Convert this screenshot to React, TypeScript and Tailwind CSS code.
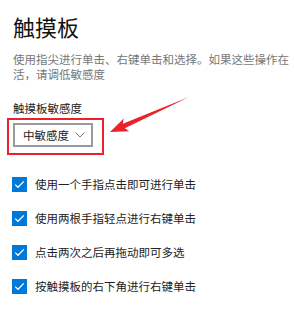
import React from 'react';

const options = [
  '使用一个手指点击即可进行单击',
  '使用两根手指轻点进行右键单击',
  '点击两次之后再拖动即可多选',
  '按触摸板的右下角进行右键单击',
];

function CheckBox() {
  return (
    <div className="w-[15px] h-[15px] bg-[#0078d7] flex items-center justify-center shrink-0">
      <svg width="15" height="15" viewBox="0 0 15 15">
        <polyline points="3.2,7.6 6,10.3 11.8,4.4" fill="none" stroke="#fff" strokeWidth="1.3" />
      </svg>
    </div>
  );
}

export default function App() {
  return (
    <div
      className="relative w-[294px] h-[310px] bg-white overflow-hidden pl-[13px]"
      style={{ fontFamily: '"Noto Sans CJK SC", "Noto Sans", sans-serif' }}
    >
      <h1 className="mt-[11px] text-[22px] leading-[30px] text-[#111] font-normal">触摸板</h1>

      <p className="mt-[11px] text-[11.5px] leading-[15px] text-[#777] whitespace-nowrap">
        使用指尖进行单击、右键单击和选择。如果这些操作在
        <br />
        活，请调低敏感度
      </p>

      <div className="mt-[19px] text-[11.5px] leading-[15px] text-[#222]">触摸板敏感度</div>

      {/* red highlight box around the dropdown */}
      <div className="mt-[2px] -ml-[6px] w-[97px] h-[37px] border-2 border-[#e8232b] pl-[4px] pt-[3px]">
        <div className="w-[80px] h-[24px] border-2 border-[#9a9a9a] flex items-center pl-[8px] pr-[6px] justify-between">
          <span className="text-[11.5px] leading-[15px] text-[#222]">中敏感度</span>
          <svg width="10" height="6" viewBox="0 0 10 6">
            <polyline points="0.5,0.5 5,5 9.5,0.5" fill="none" stroke="#777" strokeWidth="1" />
          </svg>
        </div>
      </div>

      <div className="mt-[12px] flex flex-col">
        {options.map((o) => (
          <div key={o} className="h-[34px] flex items-center -ml-[1px]">
            <CheckBox />
            <span className="ml-[8px] text-[11.5px] leading-[15px] text-[#222]">{o}</span>
          </div>
        ))}
      </div>

      {/* annotation arrow */}
      <svg className="absolute left-0 top-0" width="294" height="310" viewBox="0 0 294 310">
        <polygon
          points="110,132 123.7,118.4 122.8,123.7 189,97 124.8,128.3 129.3,131.2"
          fill="#e8232b"
        />
      </svg>
    </div>
  );
}
